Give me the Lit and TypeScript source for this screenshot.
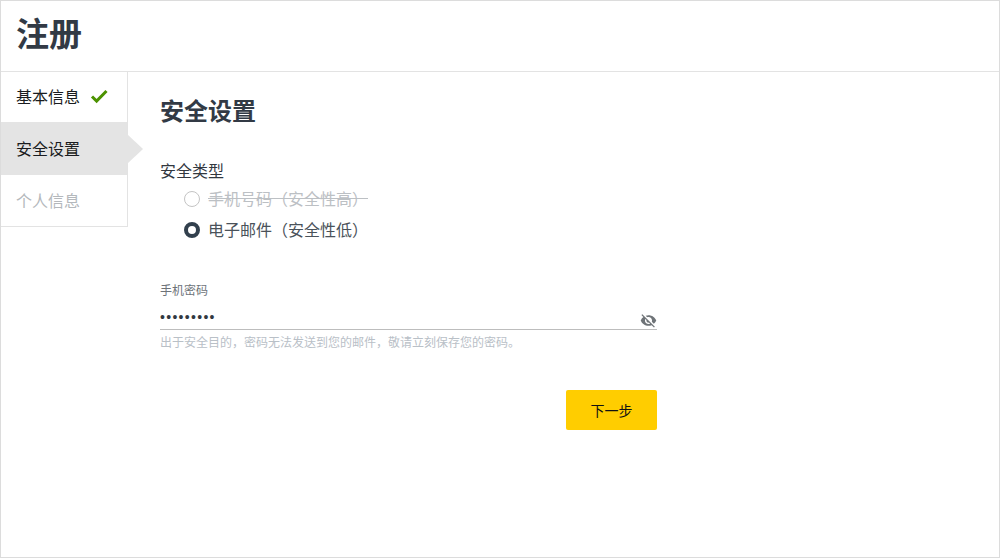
import { LitElement, html, css } from "lit";
import { customElement } from "lit/decorators.js";

@customElement("app-root")
export class AppRoot extends LitElement {
  static styles = css`
    :host {
      display: block;
      width: 1000px;
      height: 558px;
      box-sizing: border-box;
      border: 1px solid #dcdcdc;
      background: #fff;
      font-family: "Noto Sans CJK SC", "Liberation Sans", sans-serif;
      color: #32383f;
      overflow: hidden;
    }
    header {
      height: 71px;
      box-sizing: border-box;
      border-bottom: 1px solid #e3e3e3;
      padding: 0 0 8px 15px;
      display: flex;
      align-items: center;
    }
    h1 { margin: 0; font-size: 33px; line-height: 40px; font-weight: 700; color: #323a45; }
    .body { display: flex; }
    nav {
      width: 127px;
      height: 155px;
      box-sizing: border-box;
      border-right: 1px solid #e3e3e3;
      border-bottom: 1px solid #e3e3e3;
      flex: none;
    }
    .step {
      height: 52px;
      box-sizing: border-box;
      padding: 0 0 2px 15px;
      display: flex;
      align-items: center;
      gap: 10px;
      font-size: 16px;
      color: #1a1c20;
      position: relative;
    }
    .step.first { height: 50px; }
    .step.active { background: #e4e4e4; width: 126px; height: 53px; }
    .step.active::after {
      content: "";
      position: absolute;
      left: 126px;
      top: 12px;
      border-left: 16px solid #e4e4e4;
      border-top: 15px solid transparent;
      border-bottom: 15px solid transparent;
    }
    .step.off { color: #b4b8bc; }
    .step svg { width: 18px; height: 18px; display: block; }
    main { padding: 20px 0 0 32px; width: 497px; }
    h2 { margin: 0; font-size: 24px; line-height: 36px; font-weight: 700; color: #323a45; }
    .label { margin-top: 30px; font-size: 16px; line-height: 24px; color: #32383f; }
    .radios { padding-left: 24px; display: flex; flex-direction: column; gap: 6px; margin-top: 4px; }
    .radio { display: flex; align-items: center; gap: 8px; font-size: 16px; line-height: 25px; color: #4a525a; }
    .radio.off { color: #bcc0c4; }
    .radio.off span { text-decoration: line-through; }
    .dot { width: 16px; height: 16px; box-sizing: border-box; border-radius: 50%; border: 1px solid #c4c4c4; flex: none; }
    .radio.on .dot { border: 4px solid #32404d; }
    .field { margin-top: 39px; }
    .field-label { font-size: 12px; line-height: 18px; color: #6d7379; }
    .input {
      margin-top: 7px;
      height: 24px;
      box-sizing: border-box;
      border-bottom: 1px solid #bdbdbd;
      display: flex;
      align-items: center;
      justify-content: space-between;
      font-family: "Liberation Sans", sans-serif;
      font-size: 14px;
      letter-spacing: 1.3px;
      color: #32383f;
    }
    .input span { margin-bottom: 2px; }
    .input svg { width: 17px; height: 17px; display: block; margin-bottom: -5px; }
    .hint { font-size: 12px; line-height: 18px; margin-top: 3px; color: #b9c0c7; }
    .actions { display: flex; justify-content: flex-end; margin-top: 39px; }
    button {
      width: 91px;
      height: 40px;
      border: 0;
      border-radius: 2px;
      background: #ffcd00;
      color: #111;
      font: 14px "Noto Sans CJK SC", sans-serif;
      padding: 0;
    }
  `;

  render() {
    return html`
      <header><h1>注册</h1></header>
      <div class="body">
        <nav>
          <div class="step first">
            基本信息
            <svg viewBox="0 0 18 18"><path d="M2 9.5l4.6 4.6L16.5 4" fill="none" stroke="#4c9200" stroke-width="3"/></svg>
          </div>
          <div class="step active">安全设置</div>
          <div class="step off">个人信息</div>
        </nav>
        <main>
          <h2>安全设置</h2>
          <div class="label">安全类型</div>
          <div class="radios">
            <div class="radio off"><i class="dot"></i><span>手机号码（安全性高）</span></div>
            <div class="radio on"><i class="dot"></i><span>电子邮件（安全性低）</span></div>
          </div>
          <div class="field">
            <div class="field-label">手机密码</div>
            <div class="input">
              <span>•••••••••</span>
              <svg viewBox="0 0 24 24" fill="#6f7478"><path d="M12 7c2.76 0 5 2.24 5 5 0 .65-.13 1.26-.36 1.83l2.92 2.92c1.51-1.26 2.7-2.89 3.43-4.75-1.73-4.39-6-7.5-11-7.5-1.4 0-2.74.25-3.98.7l2.16 2.16C10.74 7.13 11.35 7 12 7zM2 4.27l2.28 2.28.46.46C3.08 8.3 1.78 10.02 1 12c1.73 4.39 6 7.5 11 7.5 1.55 0 3.03-.3 4.38-.84l.42.42L19.73 22 21 20.73 3.27 3 2 4.27zM7.53 9.8l1.55 1.55c-.05.21-.08.43-.08.65 0 1.66 1.34 3 3 3 .22 0 .44-.03.65-.08l1.55 1.55c-.67.33-1.41.53-2.2.53-2.76 0-5-2.24-5-5 0-.79.2-1.53.53-2.2z"/></svg>
            </div>
            <div class="hint">出于安全目的，密码无法发送到您的邮件，敬请立刻保存您的密码。</div>
          </div>
          <div class="actions"><button>下一步</button></div>
        </main>
      </div>
    `;
  }
}
